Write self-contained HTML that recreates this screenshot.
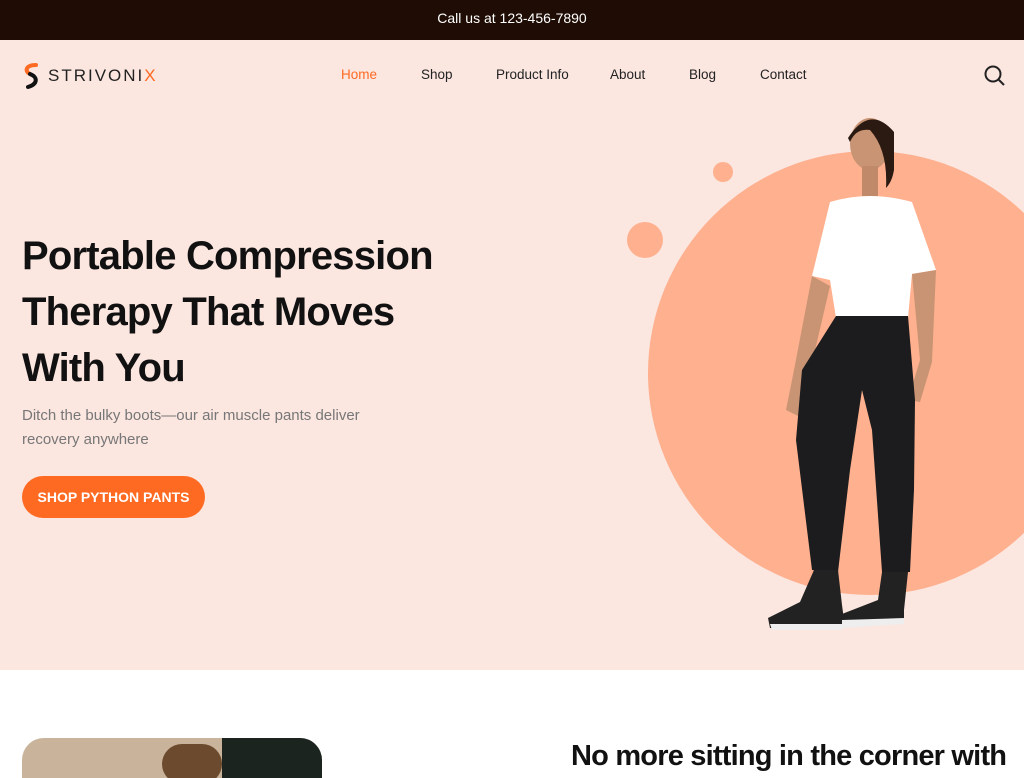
<!DOCTYPE html>
<html><head><meta charset="utf-8"><style>
*{margin:0;padding:0;box-sizing:border-box}
body{width:1024px;height:768px;overflow:hidden;font-family:"Liberation Sans",sans-serif;background:#fff;position:relative}
.top{height:40px;background:#1f0d05;color:#fff;font-size:14px;text-align:center;line-height:36px}
.hero{position:absolute;top:40px;left:0;width:1024px;height:630px;background:#fbe6e0;overflow:hidden}
.logo{position:absolute;left:22px;top:22px;display:flex;align-items:center;font-size:17px;letter-spacing:2px;color:#222}
.nav{position:absolute;top:27px;font-size:13.5px;color:#222}
h1{position:absolute;left:22px;top:188px;font-size:40px;line-height:56px;font-weight:bold;color:#111;letter-spacing:-0.8px}
.sub{position:absolute;left:22px;top:364px;font-size:15px;line-height:24px;color:#777}
.btn{position:absolute;left:22px;top:436px;width:183px;height:42px;border-radius:21px;background:#ff6a22;color:#fff;font-weight:bold;font-size:14px;text-align:center;line-height:42px}
.c{position:absolute;border-radius:50%;background:#ffb08e}
</style></head><body>
<div class="top">Call us at 123-456-7890</div>
<div class="hero">
<div class="logo"><svg width="22" height="28" viewBox="0 0 22 28"><path d="M14 3 C4 3 2 9 8 12" stroke="#ff6a22" stroke-width="4" fill="none" stroke-linecap="round"/><path d="M8 12 C16 15 16 22 6 25" stroke="#111" stroke-width="4" fill="none" stroke-linecap="round"/></svg><span style="margin-left:4px">STRIVONI<span style="color:#ff6a22">X</span></span></div>
<span class="nav" style="left:341px;color:#ff6a22">Home</span>
<span class="nav" style="left:421px">Shop</span>
<span class="nav" style="left:496px">Product Info</span>
<span class="nav" style="left:610px">About</span>
<span class="nav" style="left:689px">Blog</span>
<span class="nav" style="left:760px">Contact</span>
<svg style="position:absolute;left:984px;top:25px" width="22" height="22" viewBox="0 0 22 22"><circle cx="9" cy="9" r="7.5" stroke="#222" stroke-width="2" fill="none"/><path d="M14.5 14.5 L20 20" stroke="#222" stroke-width="2"/></svg>
<h1>Portable Compression<br>Therapy That Moves<br>With You</h1>
<div class="sub">Ditch the bulky boots—our air muscle pants deliver<br>recovery anywhere</div>
<div class="btn">SHOP PYTHON PANTS</div>
<div class="c" style="left:648px;top:111px;width:444px;height:444px"></div>
<div class="c" style="left:713px;top:122px;width:20px;height:20px"></div>
<div class="c" style="left:627px;top:182px;width:36px;height:36px"></div>
<svg style="position:absolute;left:760px;top:70px" width="200" height="520" viewBox="0 0 200 520">
<ellipse cx="110" cy="34" rx="20" ry="26" fill="#c99474"/>
<path d="M88 28 Q110 -6 134 22 L134 60 Q132 72 126 78 Q128 40 110 20 Q96 18 90 32 Z" fill="#2a1a12"/>
<rect x="102" y="56" width="16" height="30" fill="#c08a6a"/>
<path d="M70 92 Q110 80 152 92 L176 160 L152 164 L148 208 L76 208 L70 170 L52 166 Z" fill="#fff"/>
<path d="M52 166 L34 260 L26 300 L38 306 L50 262 L70 176 Z" fill="#c99474"/>
<path d="M152 164 L160 250 L148 290 L160 292 L172 252 L176 160 Z" fill="#c99474"/>
<path d="M76 206 L148 206 L155 290 L154 380 L150 462 L122 462 L112 320 L102 280 L90 360 L78 462 L52 460 L36 330 L42 260 Z" fill="#1c1c1e"/>
<path d="M54 460 L78 460 L82 495 L84 510 L82 518 L10 518 L8 508 L40 492 Z" fill="#222"/>
<path d="M122 462 L148 462 L144 500 L144 512 L80 516 L82 504 L118 490 Z" fill="#222"/>
<path d="M10 514 L82 514 L82 520 L12 520 Z M82 510 L144 508 L144 514 L82 518 Z" fill="#eee"/>
</svg>
</div>
<div style="position:absolute;left:22px;top:738px;width:300px;height:40px;border-radius:22px 22px 0 0;background:#c9b39a;overflow:hidden"><div style="position:absolute;left:200px;top:0;width:100px;height:40px;background:#1c2420"></div><div style="position:absolute;left:140px;top:6px;width:60px;height:40px;border-radius:30px;background:#6b4a2e"></div></div>
<div style="position:absolute;left:571px;top:740px;font-size:29px;font-weight:bold;color:#111;white-space:nowrap;letter-spacing:-0.8px">No more sitting in the corner with</div>
</body></html>
